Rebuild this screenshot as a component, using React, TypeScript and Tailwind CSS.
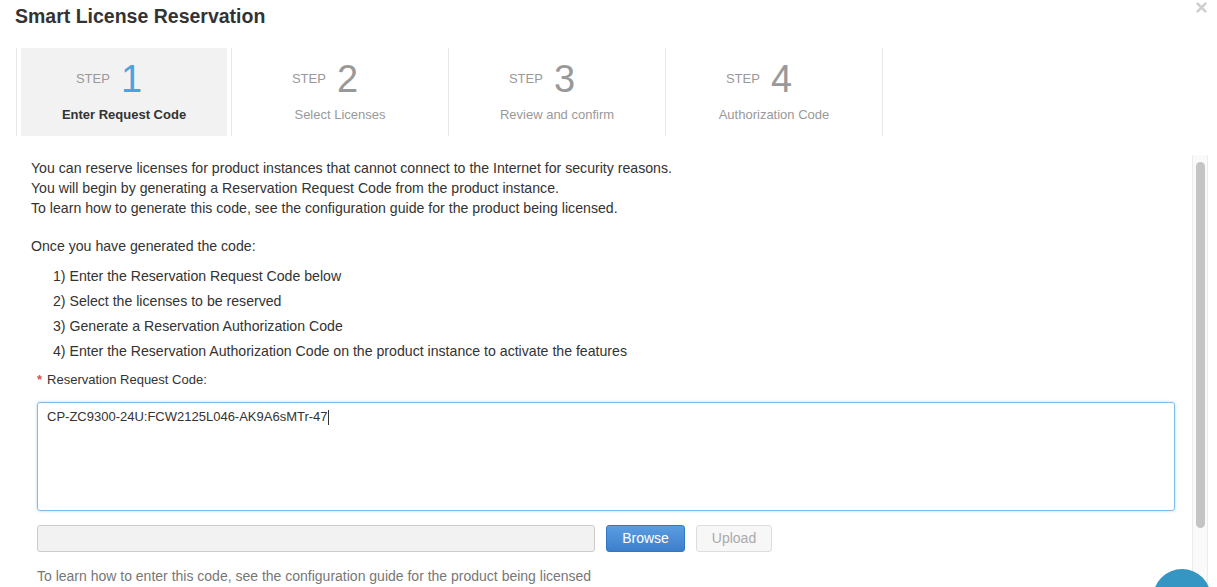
import React from "react";

const steps = [
  { n: "1", label: "Enter Request Code" },
  { n: "2", label: "Select Licenses" },
  { n: "3", label: "Review and confirm" },
  { n: "4", label: "Authorization Code" },
];

const bullets = [
  "1) Enter the Reservation Request Code below",
  "2) Select the licenses to be reserved",
  "3) Generate a Reservation Authorization Code",
  "4) Enter the Reservation Authorization Code on the product instance to activate the features",
];

function Step({ step, index }: { step: (typeof steps)[0]; index: number }) {
  const active = index === 0;
  return (
    <div
      className={
        index === 0
          ? "w-[215px] h-full border-l border-[#e6e6e6] px-[4px]"
          : "w-[217px] h-full border-l border-[#e6e6e6] px-[4px]"
      }
    >
      <div className={active ? "h-full bg-[#f2f2f2] flex flex-col items-center" : "h-full flex flex-col items-center"}>
        <div className="flex items-center gap-[11px] pr-[30px] pt-[15px] h-[47px]">
          <span className="text-[13px] text-[#999]">STEP</span>
          <span className={active ? "text-[38px] leading-none text-[#4aa3df]" : "text-[38px] leading-none text-[#999]"}>
            {step.n}
          </span>
        </div>
        <div
          className={
            active
              ? "mt-[10px] text-[13px] font-bold text-[#333]"
              : "mt-[10px] text-[13px] text-[#999]"
          }
        >
          {step.label}
        </div>
      </div>
    </div>
  );
}

export default function App() {
  return (
    <div className="relative w-[1217px] h-[587px] overflow-hidden bg-white font-['Liberation_Sans',Arial,sans-serif] text-[#333]">
      {/* Header */}
      <div className="flex items-start justify-between h-[48px] pl-[15px] pr-[10px]">
        <h1 className="pt-[4px] text-[19.5px] leading-[24px] font-bold text-[#333]">Smart License Reservation</h1>
        <svg width="11" height="11" viewBox="0 0 10 10" className="mt-[2px]">
          <path d="M1.5 1.5 L8.5 8.5 M8.5 1.5 L1.5 8.5" stroke="#cfcfcf" strokeWidth="2.4" strokeLinecap="round" />
        </svg>
      </div>

      {/* Steps */}
      <div className="flex h-[88px] pl-[16px]">
        {steps.map((s, i) => (
          <Step key={s.n} step={s} index={i} />
        ))}
        <div className="border-l border-[#e6e6e6]" />
      </div>

      {/* Body */}
      <div className="flex h-[451px] mt-[19px]">
        <div className="flex-1 pl-[31px] pt-[3px]">
          <p className="text-[14.13px] leading-[20px]">
            You can reserve licenses for product instances that cannot connect to the Internet for security reasons.
            <br />
            You will begin by generating a Reservation Request Code from the product instance.
            <br />
            To learn how to generate this code, see the configuration guide for the product being licensed.
          </p>
          <p className="mt-[18px] text-[14.13px] leading-[20px]">Once you have generated the code:</p>
          <ul className="mt-[8px] pl-[22px]">
            {bullets.map((b) => (
              <li key={b} className="text-[14.13px] leading-[25px]">
                {b}
              </li>
            ))}
          </ul>
          <div className="pl-[6px]">
            <div className="mt-[6px] flex items-center text-[13px] leading-[20px]">
              <span className="text-[#d9534f] font-bold mr-[5px]">*</span>
              <span>Reservation Request Code:</span>
            </div>
            <div className="mt-[12px] w-[1138px] h-[109px] border border-[#7cbdee] rounded-[3px] shadow-[0_0_3px_rgba(102,175,233,0.5)] px-[9px] pt-[4px] text-[13px] leading-[20px]">
              CP-ZC9300-24U:FCW2125L046-AK9A6sMTr-47
              <span className="inline-block w-px h-[15px] bg-[#333] align-middle" />
            </div>
            <div className="mt-[14px] flex items-center h-[27px]">
              <div className="w-[558px] h-[27px] bg-[#f2f2f2] border border-[#cccccc] rounded-[3px]" />
              <button className="ml-[11px] w-[79px] h-[27px] rounded-[3px] border border-[#3277c2] bg-gradient-to-b from-[#5a9de0] to-[#3d7fcc] text-white text-[14px]">
                Browse
              </button>
              <button className="ml-[11px] w-[76px] h-[27px] rounded-[3px] border border-[#dddddd] bg-[#f7f7f7] text-[#aaaaaa] text-[14px]">
                Upload
              </button>
            </div>
            <p className="mt-[14px] text-[14px] leading-[20px] text-[#777]">
              To learn how to enter this code, see the configuration guide for the product being licensed
            </p>
          </div>
        </div>
        {/* Scrollbar */}
        <div className="w-[16px] mr-[9px] pt-[7px] bg-[#fafafa] border-x border-[#ececec] flex justify-center">
          <div className="w-[9px] h-[366px] rounded-full bg-[#c4c4c4]" />
        </div>
      </div>

      {/* Floating chat button */}
      <div className="absolute left-[1153px] top-[569px] w-[58px] h-[58px] rounded-full bg-[#3596c4]" />
    </div>
  );
}
